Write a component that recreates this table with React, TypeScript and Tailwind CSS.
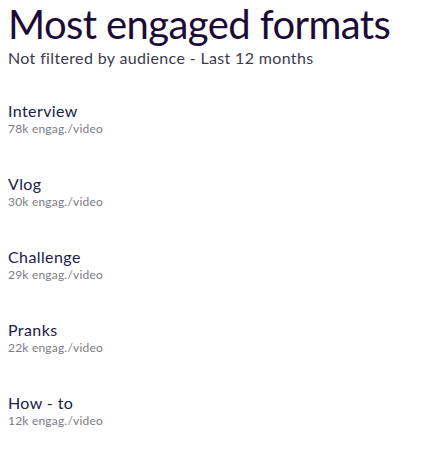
const formats = [
  { name: 'Interview', value: '78k engag./video' },
  { name: 'Vlog', value: '30k engag./video' },
  { name: 'Challenge', value: '29k engag./video' },
  { name: 'Pranks', value: '22k engag./video' },
  { name: 'How - to', value: '12k engag./video' },
];

export default function App() {
  return (
    <div className="min-h-screen bg-white px-2 pt-[2px] font-['Lato',sans-serif]">
      <h1 className="text-[40px] leading-[44px] tracking-[-0.6px] text-[#1c0b35]">Most engaged formats</h1>
      <p className="mt-[2px] text-[16px] leading-[20px] tracking-[0.35px] text-[#3b3b4d]">
        Not filtered by audience - Last 12 months
      </p>
      <ul className="mt-[33px] flex flex-col gap-[37px]">
        {formats.map((f) => (
          <li key={f.name}>
            <div className="text-[16px] leading-[20px] tracking-[0.4px] text-[#20204a]">{f.name}</div>
            <div className="text-[12px] leading-[16px] tracking-[0.2px] text-[#7c7c84]">{f.value}</div>
          </li>
        ))}
      </ul>
    </div>
  );
}
